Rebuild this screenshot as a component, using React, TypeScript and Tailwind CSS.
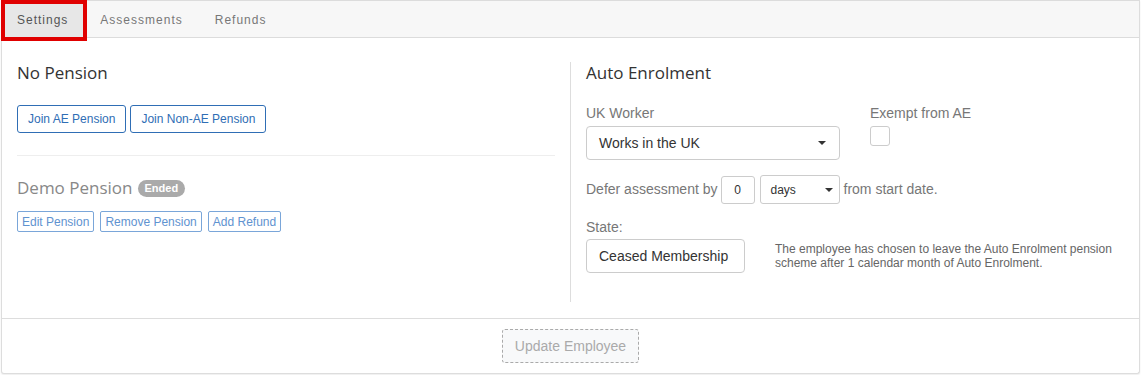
function Caret() {
  return (
    <svg width="8" height="4" viewBox="0 0 8 4" className="shrink-0">
      <path d="M0 0h8L4 4z" fill="#333" />
    </svg>
  );
}

export default function App() {
  const body = { fontFamily: '"Liberation Sans", Arial, sans-serif' };
  const heading = { fontFamily: '"Open Sans", Lato, sans-serif' };

  return (
    <div className="w-[1141px] h-[375px] bg-white" style={body}>
      <div className="ml-px w-[1139px] border border-t-0 border-[#ddd] rounded-b-[3px] shadow-[0_1px_2px_rgba(0,0,0,0.08)] bg-white">
        {/* Tabs */}
        <div className="h-[38px] bg-[#f7f7f7] border-t border-b border-[#dcdcdc] flex text-[12px] tracking-[1px]">
          <div className="relative -ml-px">
            <div className="h-[37px] px-4 flex items-center bg-[#e7e7e7] text-[#555]">
              Settings
            </div>
            <div className="absolute -top-px left-0 w-[86px] h-[41px] border-[4px] border-[#e00000]" />
          </div>
          <div className="h-[37px] pl-4 pr-4 flex items-center text-[#777]">Assessments</div>
          <div className="h-[37px] px-4 flex items-center text-[#777]">Refunds</div>
        </div>

        {/* Body */}
        <div className="flex pt-6">
          {/* Left column */}
          <div className="w-[568px] shrink-0 pl-[15px] pr-[15px]">
            <h2 className="text-[17px] leading-[22px] text-[#333]" style={heading}>
              No Pension
            </h2>
            <div className="mt-[21px] flex gap-[4px]">
              <button className="h-[28px] px-[10px] border border-[#2f6eb5] rounded-[3px] text-[12px] text-[#2f6eb5]">
                Join AE Pension
              </button>
              <button className="h-[28px] px-[10px] border border-[#2f6eb5] rounded-[3px] text-[12px] text-[#2f6eb5]">
                Join Non-AE Pension
              </button>
            </div>
            <div className="mt-[22px] border-t border-[#eee]" />
            <div className="mt-[21px] flex items-center gap-[5px] h-[22px]">
              <h2 className="text-[17px] leading-[22px] text-[#888]" style={heading}>
                Demo Pension
              </h2>
              <span className="h-[17px] px-[7px] rounded-full bg-[#aaa] text-white text-[11px] font-bold flex items-center">
                Ended
              </span>
            </div>
            <div className="mt-[12px] flex gap-[6px]">
              <button className="h-[21px] px-[4px] border border-[#7aa6d9] rounded-[2px] text-[12px] text-[#5f93d0]">
                Edit Pension
              </button>
              <button className="h-[21px] px-[4px] border border-[#7aa6d9] rounded-[2px] text-[12px] text-[#5f93d0]">
                Remove Pension
              </button>
              <button className="h-[21px] px-[4px] border border-[#7aa6d9] rounded-[2px] text-[12px] text-[#5f93d0]">
                Add Refund
              </button>
            </div>
          </div>

          {/* Right column */}
          <div className="flex-1 min-w-0 border-l border-[#ddd] pl-[15px] pr-[15px] pb-[29px]">
            <h2 className="text-[17px] leading-[22px] text-[#333]" style={heading}>
              Auto Enrolment
            </h2>
            <div className="mt-[21px] flex">
              <div className="w-[254px]">
                <div className="text-[14px] leading-4 text-[#777]">UK Worker</div>
                <div className="mt-[5px] h-[34px] border border-[#ccc] rounded-[4px] flex items-center justify-between pl-3 pr-[13px] text-[14px] text-[#333]">
                  Works in the UK
                  <Caret />
                </div>
              </div>
              <div className="ml-[30px]">
                <div className="text-[14px] leading-4 text-[#777]">Exempt from AE</div>
                <div className="mt-[5px] w-[20px] h-[20px] border border-[#ccc] rounded-[3px]" />
              </div>
            </div>
            <div className="mt-[15px] flex items-center text-[14px] text-[#777]">
              <span>Defer assessment by</span>
              <div className="ml-[3px] w-[34px] h-[28px] border border-[#ccc] rounded-[3px] flex items-center justify-center text-[12px] text-[#333]">
                0
              </div>
              <div className="ml-[5px] w-[80px] h-[29px] border border-[#ccc] rounded-[3px] flex items-center justify-between pl-[10px] pr-[6px] text-[12px] text-[#333]">
                days
                <Caret />
              </div>
              <span className="ml-[4px]">from start date.</span>
            </div>
            <div className="mt-[15px] text-[14px] leading-4 text-[#777]">State:</div>
            <div className="mt-[4px] flex items-center">
              <div className="w-[159px] h-[34px] shrink-0 border border-[#ccc] rounded-[4px] flex items-center pl-3 text-[14px] text-[#333]">
                Ceased Membership
              </div>
              <p className="ml-[30px] w-[345px] text-[12px] leading-[14px] text-[#666]">
                The employee has chosen to leave the Auto Enrolment pension scheme after 1 calendar month of Auto Enrolment.
              </p>
            </div>
          </div>
        </div>

        {/* Footer */}
        <div className="mt-4 border-t border-[#ddd] pt-[10px] pb-[10px] flex justify-center">
          <button className="h-[34px] px-3 border border-dashed border-[#aaa] rounded-[3px] bg-[#f8f9fa] text-[14px] text-[#aaa]">
            Update Employee
          </button>
        </div>
      </div>
    </div>
  );
}
